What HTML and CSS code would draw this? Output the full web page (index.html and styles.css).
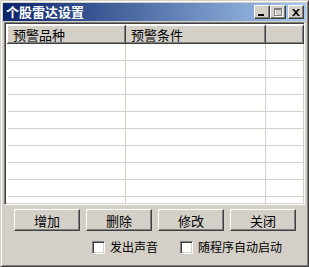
FILE: index.html
```html
<!DOCTYPE html>
<html lang="zh-CN">
<head>
    <meta charset="UTF-8">
    <title>个股雷达设置</title>
    <link rel="stylesheet" href="styles.css">
</head>
<body>
    <div class="window">
        <div class="titlebar">
            <span class="title">个股雷达设置</span>
            <div class="controls">
                <span class="ctl">
                    <svg width="8" height="7" viewBox="0 0 8 7"><rect x="0" y="5" width="6" height="2" fill="#000"/></svg>
                </span>
                <span class="ctl">
                    <svg width="9" height="9" viewBox="0 0 9 9"><rect x="1.5" y="1.5" width="7" height="7" fill="none" stroke="#fff"/><rect x="0.5" y="0.5" width="7" height="7" fill="none" stroke="#808080"/><rect x="0" y="1" width="8" height="1" fill="#808080"/></svg>
                </span>
                <span class="ctl close">
                    <svg width="8" height="7" viewBox="0 0 8 7"><path d="M0 0h2l2 2 2-2h2L5 3.5 8 7H6L4 5 2 7H0l3-3.5z" fill="#000"/></svg>
                </span>
            </div>
        </div>
        <div class="list">
            <table>
                <thead>
                    <tr>
                        <th class="c1">预警品种</th>
                        <th class="c2">预警条件</th>
                        <th class="c3"></th>
                    </tr>
                </thead>
                <tbody>
                    <tr><td></td><td></td><td></td></tr>
                    <tr><td></td><td></td><td></td></tr>
                    <tr><td></td><td></td><td></td></tr>
                    <tr><td></td><td></td><td></td></tr>
                    <tr><td></td><td></td><td></td></tr>
                    <tr><td></td><td></td><td></td></tr>
                    <tr><td></td><td></td><td></td></tr>
                    <tr><td></td><td></td><td></td></tr>
                    <tr><td></td><td></td><td></td></tr>
                    <tr><td></td><td></td><td></td></tr>
                </tbody>
            </table>
        </div>
        <div class="buttons">
            <button class="btn">增加</button>
            <button class="btn">删除</button>
            <button class="btn">修改</button>
            <button class="btn">关闭</button>
        </div>
        <div class="options">
            <label class="opt"><span class="box"></span>发出声音</label>
            <label class="opt"><span class="box"></span>随程序自动启动</label>
        </div>
    </div>
</body>
</html>
```

FILE: styles.css
```css
body {
    margin: 0;
    background: #d4d0c8;
    font-family: "Noto Sans CJK SC", "DejaVu Sans", sans-serif;
    font-size: 12px;
    color: #000;
}
.window {
    width: 309px;
    height: 267px;
    box-sizing: border-box;
    background: #d4d0c8;
    border: 1px solid;
    border-color: #d4d0c8 #404040 #404040 #d4d0c8;
    box-shadow: inset 1px 1px #fff, inset -1px -1px #808080;
    padding: 2px;
}
.titlebar {
    height: 18px;
    display: flex;
    align-items: center;
    justify-content: space-between;
    background: linear-gradient(to right, #0a246a, #a6caf0);
    padding: 0 2px 0 3px;
}
.title {
    color: #fff;
    font-weight: bold;
    font-size: 13px;
    line-height: 18px;
}
.controls {
    display: flex;
    align-items: center;
}
.ctl {
    width: 16px;
    height: 14px;
    box-sizing: border-box;
    background: #d4d0c8;
    border: 1px solid;
    border-color: #fff #404040 #404040 #fff;
    box-shadow: inset -1px -1px #808080;
    display: flex;
    align-items: center;
    justify-content: center;
}
.close {
    margin-left: 2px;
}
.list {
    margin: 1px 1px 0 1px;
    height: 183px;
    box-sizing: border-box;
    background: #fff;
    border: 1px solid;
    border-color: #808080 #fff #fff #808080;
    box-shadow: inset 1px 1px #404040, inset -1px -1px #d4d0c8;
    padding: 2px 0 0 2px;
    overflow: hidden;
}
table {
    border-collapse: collapse;
    width: 297px;
    table-layout: fixed;
}
th {
    height: 18px;
    box-sizing: border-box;
    padding: 0 0 0 5px;
    text-align: left;
    font-weight: normal;
    font-size: 13px;
    background: #d4d0c8;
    border: 1px solid;
    border-color: #fff #404040 #404040 #fff;
    box-shadow: inset -1px -1px #808080;
    line-height: 15px;
}
.c1 {
    width: 118px;
}
.c2 {
    width: 140px;
}
td {
    height: 16px;
    padding: 0;
    border-right: 1px solid #d4d0c8;
    border-bottom: 1px solid #d4d0c8;
}
.buttons {
    display: flex;
    gap: 6px;
    margin: 4px 0 0 11px;
}
.btn {
    width: 66px;
    height: 22px;
    box-sizing: border-box;
    background: #d4d0c8;
    font-family: inherit;
    font-size: 13px;
    color: #000;
    border: 1px solid;
    border-color: #fff #404040 #404040 #fff;
    box-shadow: inset -1px -1px #808080;
    padding: 0;
}
.options {
    display: flex;
    gap: 22px;
    margin: 9px 0 0 89px;
}
.opt {
    display: flex;
    align-items: center;
    gap: 5px;
    font-size: 12px;
    line-height: 14px;
}
.box {
    width: 13px;
    height: 13px;
    box-sizing: border-box;
    background: #fff;
    border: 1px solid;
    border-color: #808080 #fff #fff #808080;
    box-shadow: inset 1px 1px #404040, inset -1px -1px #d4d0c8;
}
```
